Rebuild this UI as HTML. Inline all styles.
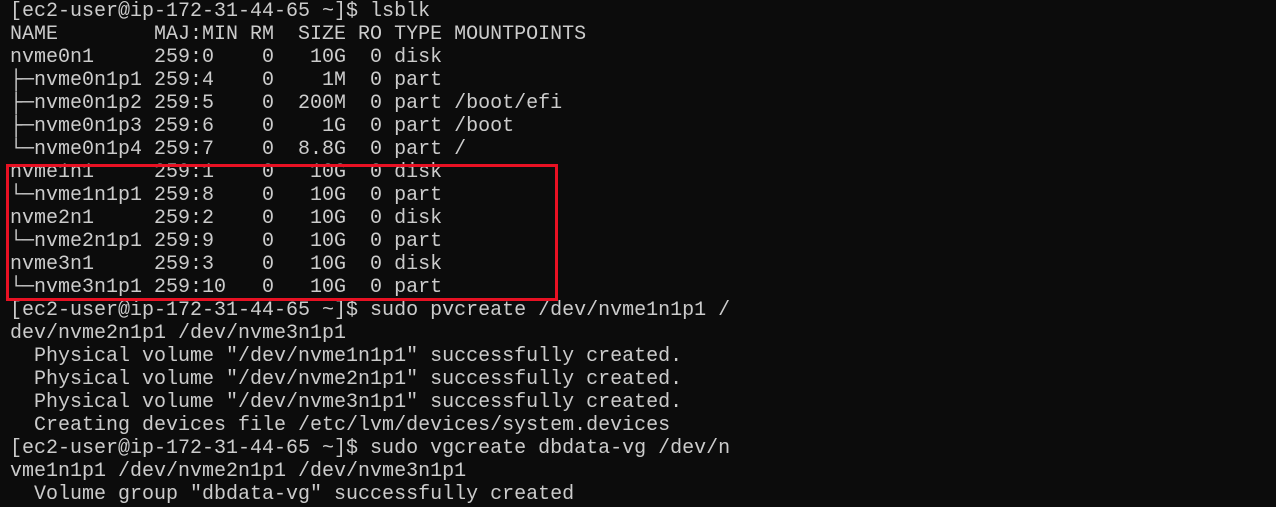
<!DOCTYPE html>
<html><head><meta charset="utf-8"><style>
html,body{margin:0;padding:0;background:#0c0c0c;width:1276px;height:507px;overflow:hidden}
pre{margin:0;padding:0 0 0 10px;font-family:"Liberation Mono","DejaVu Sans Mono",monospace;font-size:20px;line-height:23px;color:#cccccc;white-space:pre}
.box{position:absolute;left:6px;top:164px;width:546px;height:131px;border:3px solid #e81123}
</style></head><body>
<pre>[ec2-user@ip-172-31-44-65 ~]$ lsblk
NAME        MAJ:MIN RM  SIZE RO TYPE MOUNTPOINTS
nvme0n1     259:0    0   10G  0 disk
├─nvme0n1p1 259:4    0    1M  0 part
├─nvme0n1p2 259:5    0  200M  0 part /boot/efi
├─nvme0n1p3 259:6    0    1G  0 part /boot
└─nvme0n1p4 259:7    0  8.8G  0 part /
nvme1n1     259:1    0   10G  0 disk
└─nvme1n1p1 259:8    0   10G  0 part
nvme2n1     259:2    0   10G  0 disk
└─nvme2n1p1 259:9    0   10G  0 part
nvme3n1     259:3    0   10G  0 disk
└─nvme3n1p1 259:10   0   10G  0 part
[ec2-user@ip-172-31-44-65 ~]$ sudo pvcreate /dev/nvme1n1p1 /
dev/nvme2n1p1 /dev/nvme3n1p1
  Physical volume "/dev/nvme1n1p1" successfully created.
  Physical volume "/dev/nvme2n1p1" successfully created.
  Physical volume "/dev/nvme3n1p1" successfully created.
  Creating devices file /etc/lvm/devices/system.devices
[ec2-user@ip-172-31-44-65 ~]$ sudo vgcreate dbdata-vg /dev/n
vme1n1p1 /dev/nvme2n1p1 /dev/nvme3n1p1
  Volume group "dbdata-vg" successfully created
[ec2-user@ip-172-31-44-65 ~]$</pre>
<div class="box"></div>
</body></html>
